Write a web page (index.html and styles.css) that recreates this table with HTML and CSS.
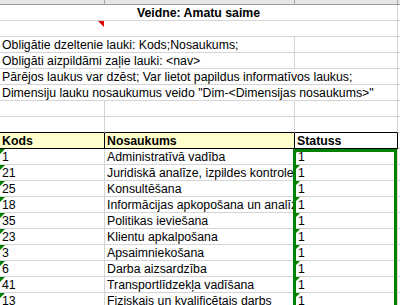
FILE: index.html
```html
<!DOCTYPE html>
<html lang="lv">
<head>
<meta charset="utf-8">
<title>Veidne: Amatu saime</title>
<link rel="stylesheet" href="styles.css">
</head>
<body>
<div class="sheet">
  <div class="grid">
    <div class="c cap"></div><div class="c cap"></div><div class="c cap"></div><div class="c cap d"></div>

    <div class="c span3 title">Veidne: Amatu saime</div><div class="c d"></div>

    <div class="c nr"><span class="comment"></span></div><div class="c span2"></div><div class="c d"></div>

    <div class="c span2">Obligātie dzeltenie lauki: Kods;Nosaukums;</div><div class="c"></div><div class="c d"></div>
    <div class="c span2">Obligāti aizpildāmi zaļie lauki: &lt;nav&gt;</div><div class="c"></div><div class="c d"></div>
    <div class="c span3">Pārējos laukus var dzēst; Var lietot papildus informatīvos laukus;</div><div class="c d"></div>
    <div class="c span3">Dimensiju lauku nosaukumus veido "Dim-&lt;Dimensijas nosaukums&gt;"</div><div class="c d"></div>

    <div class="c"></div><div class="c"></div><div class="c"></div><div class="c d"></div>
    <div class="c above"></div><div class="c above"></div><div class="c above"></div><div class="c d"></div>

    <div class="c hd yellow">Kods</div><div class="c hd yellow">Nosaukums</div><div class="c hd">Statuss</div><div class="c d"></div>

    <div class="c txt">1</div><div class="c">Administratīvā vadība</div><div class="c txt st">1</div><div class="c d"></div>
    <div class="c txt">21</div><div class="c">Juridiskā analīze, izpildes kontrole</div><div class="c txt st">1</div><div class="c d"></div>
    <div class="c txt">25</div><div class="c">Konsultēšana</div><div class="c txt st">1</div><div class="c d"></div>
    <div class="c txt">18</div><div class="c">Informācijas apkopošana un analīze</div><div class="c txt st">1</div><div class="c d"></div>
    <div class="c txt">35</div><div class="c">Politikas ieviešana</div><div class="c txt st">1</div><div class="c d"></div>
    <div class="c txt">23</div><div class="c">Klientu apkalpošana</div><div class="c txt st">1</div><div class="c d"></div>
    <div class="c txt">3</div><div class="c">Apsaimniekošana</div><div class="c txt st">1</div><div class="c d"></div>
    <div class="c txt">6</div><div class="c">Darba aizsardzība</div><div class="c txt st">1</div><div class="c d"></div>
    <div class="c txt">41</div><div class="c">Transportlīdzekļa vadīšana</div><div class="c txt st">1</div><div class="c d"></div>
    <div class="c txt">13</div><div class="c">Fiziskais un kvalificētais darbs</div><div class="c txt st">1</div><div class="c d"></div>
  </div>
  <div class="selection"></div>
</div>
</body>
</html>
```
FILE: styles.css
```css
html, body {
  margin: 0;
  padding: 0;
  background: #fff;
  overflow: hidden;
}
body {
  width: 400px;
  height: 305px;
  font-family: "Liberation Sans", Arial, sans-serif;
  font-size: 12.3px;
  color: #000;
}
.sheet {
  position: relative;
  width: 400px;
  height: 305px;
  overflow: hidden;
}
.grid {
  display: grid;
  grid-template-columns: 105px 190px 103px 10px;
  grid-template-rows: 5px;
  grid-auto-rows: 16px;
}
.c {
  position: relative;
  box-sizing: border-box;
  border-right: 1px solid #d4d4d4;
  border-bottom: 1px solid #d4d4d4;
  padding-left: 2px;
  padding-top: 1px;
  line-height: 14px;
  white-space: nowrap;
  overflow: hidden;
}
.c.d {
  border-right: none;
}
.cap {
  background: #e6e6e6;
  border-right-color: #a8a8a8;
  border-bottom-color: #9c9c9c;
  padding-top: 0;
}
.span2 { grid-column: span 2; }
.span3 { grid-column: span 3; }
.title {
  text-align: center;
  font-weight: bold;
  padding-left: 0;
}
.nr { border-right-color: #fff; overflow: visible; }
.comment {
  position: absolute;
  top: 0;
  right: 0;
  width: 0;
  height: 0;
  border-top: 6px solid #e00000;
  border-left: 6px solid transparent;
}
.above { border-bottom-color: #000; }
.hd {
  font-weight: bold;
  border-right-color: #000;
  border-bottom-color: #000;
}
.yellow { background: #ffffcc; }
.st { padding-left: 3px; }
.txt::before {
  content: "";
  position: absolute;
  top: 0;
  left: 0;
  width: 0;
  height: 0;
  border-top: 5px solid #008000;
  border-right: 5px solid transparent;
}
.selection {
  position: absolute;
  left: 293px;
  top: 149px;
  width: 104px;
  height: 200px;
  box-sizing: border-box;
  border: 3px solid #008000;
  pointer-events: none;
}
```
